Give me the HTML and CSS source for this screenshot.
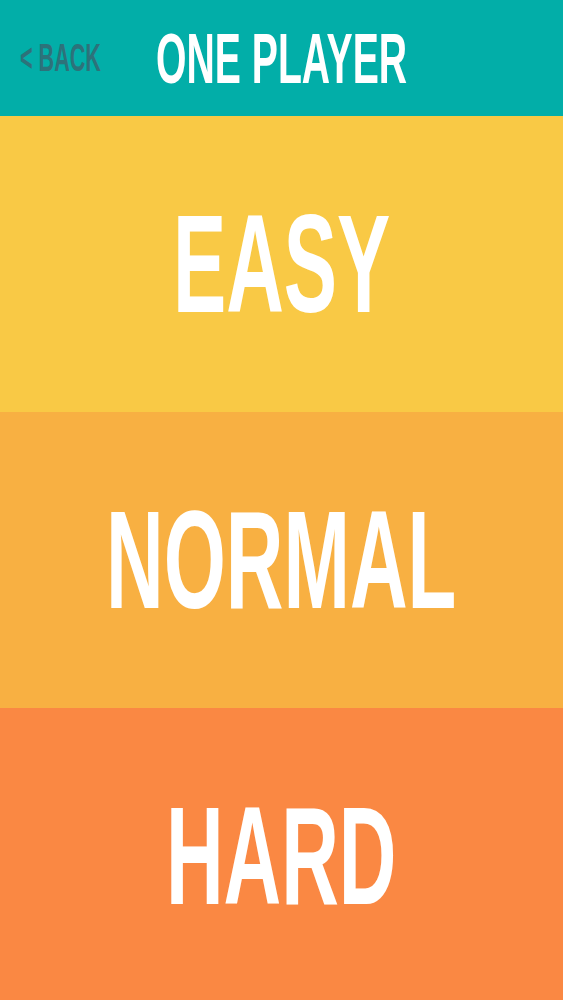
FILE: index.html
```html
<!DOCTYPE html>
<html lang="en">
<head>
    <meta charset="UTF-8">
    <meta name="viewport" content="width=device-width, initial-scale=1.0">
    <title>One Player</title>
    <link rel="stylesheet" href="styles.css">
</head>
<body>
    <div class="screen">
        <header class="topbar">
            <a class="back" href="#"><span class="narrow">&lt; BACK</span></a>
            <h1 class="title"><span class="narrow">ONE PLAYER</span></h1>
        </header>
        <button class="level easy"><span class="narrow">EASY</span></button>
        <button class="level normal"><span class="narrow">NORMAL</span></button>
        <button class="level hard"><span class="narrow">HARD</span></button>
    </div>
</body>
</html>
```

FILE: styles.css
```css
html, body {
    margin: 0;
    padding: 0;
    height: 100%;
    overflow: hidden;
}

body {
    font-family: "Liberation Sans", Arial, sans-serif;
    font-weight: bold;
}

.screen {
    display: flex;
    flex-direction: column;
}

.narrow {
    display: inline-block;
    transform: scaleX(0.57);
    white-space: nowrap;
}

.topbar {
    height: 116px;
    background-color: #02aea8;
    display: grid;
    grid-template-columns: minmax(0, 1fr) auto minmax(0, 1fr);
    align-items: center;
}

.back {
    grid-column: 1;
    grid-row: 1;
    justify-self: start;
    padding-left: 20px;
    font-size: 38px;
    line-height: 1;
    color: #2d727a;
    text-decoration: none;
}

.back .narrow {
    transform: scaleX(0.567);
    transform-origin: left center;
}

.title {
    grid-column: 2;
    grid-row: 1;
    margin: 0;
    font-size: 71px;
    line-height: 1;
    color: #fff;
    font-weight: bold;
}

.title .narrow {
    transform: scaleX(0.552);
}

.level {
    height: 296px;
    flex-shrink: 0;
    border: none;
    padding: 0;
    display: flex;
    align-items: center;
    justify-content: center;
    font-family: inherit;
    font-weight: bold;
    font-size: 140px;
    line-height: 1;
    color: #fff;
    cursor: pointer;
}

.easy {
    background-color: #f9c945;
}

.normal {
    background-color: #f8b042;
}

.hard {
    background-color: #fa8843;
}
```
